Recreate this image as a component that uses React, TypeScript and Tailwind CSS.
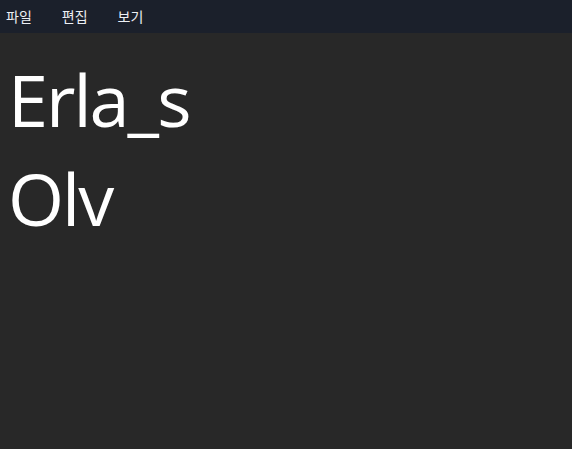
import React from "react";

export default function App() {
  return (
    <div className="w-[572px] h-[449px] bg-[#282828] flex flex-col overflow-hidden font-['Open_Sans','Noto_Sans_CJK_KR',sans-serif]">
      <div className="h-[33px] bg-[#1b202b] flex items-center gap-[30px] px-[6px] text-[14px] text-[#eceff4] font-['Noto_Sans_CJK_KR',sans-serif]">
        <span>파일</span>
        <span>편집</span>
        <span>보기</span>
      </div>
      <div className="px-[8px] pt-[17px] text-white text-[72px] leading-[99px] tracking-[-2px]">
        <div>Erla_s</div>
        <div>Olv</div>
      </div>
    </div>
  );
}
